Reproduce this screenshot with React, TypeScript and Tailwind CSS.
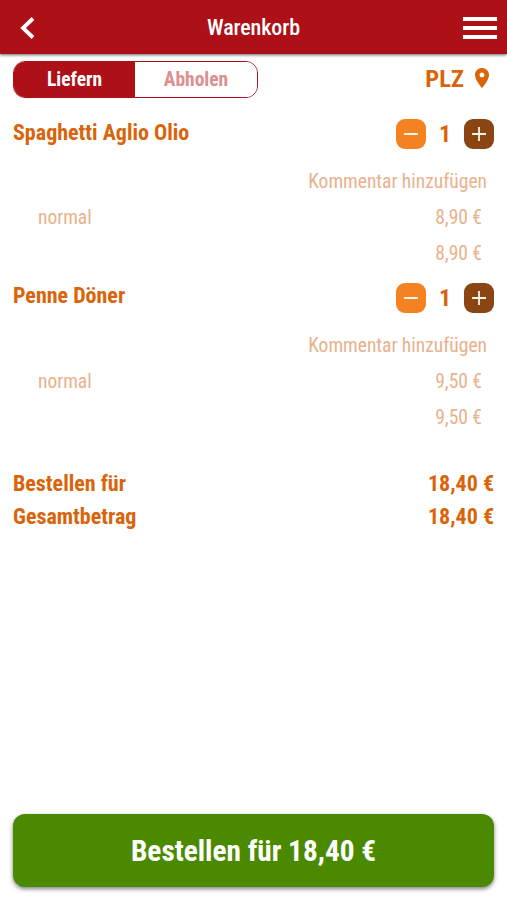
import { useState } from "react";
import { MdLocationOn } from "react-icons/md";

type CartItem = {
  id: number;
  name: string;
  variant: string;
  price: number;
  count: number;
};

const initialItems: CartItem[] = [
  { id: 1, name: "Spaghetti Aglio Olio", variant: "normal", price: 8.9, count: 1 },
  { id: 2, name: "Penne Döner", variant: "normal", price: 9.5, count: 1 },
];

const formatPrice = (value: number) => value.toFixed(2).replace(".", ",") + " €";

const Header = () => {
  return (
    <header className="flex h-[54px] items-center justify-between bg-[#ad1017] pl-5 pr-[10px] text-white shadow-[0_1px_3px_rgba(0,0,0,0.6)]">
      <button className="w-[34px]" aria-label="Zurück">
        <svg width="16" height="22" viewBox="0 0 16 22" fill="none" className="mt-0.5">
          <path d="M13 1.5 3 11l10 9.5" stroke="currentColor" strokeWidth="3.8" />
        </svg>
      </button>
      <h1 className="-ml-[10px] pt-0.5 text-[22px] font-medium tracking-[-0.1px] leading-[52px]">Warenkorb</h1>
      <button className="mt-0.5 flex w-[34px] flex-col gap-[5px]" aria-label="Menü">
        <span className="h-1 bg-white" />
        <span className="h-1 bg-white" />
        <span className="h-1 bg-white" />
      </button>
    </header>
  );
};

const ItemRow = ({
  item,
  onChange,
}: {
  item: CartItem;
  onChange: (id: number, diff: number) => void;
}) => {
  const total = formatPrice(item.price * item.count);

  return (
    <li className="h-[163.6px] text-[19.5px] text-[#eab18c]">
      <div className="flex h-[46px] items-center justify-between text-[22px] font-bold text-[#d9640a]">
        <span className="-mt-1">{item.name}</span>
        <div className="flex items-center">
          <button
            onClick={() => onChange(item.id, -1)}
            className="flex size-[30px] items-center justify-center rounded-[9px] bg-[#f58220] text-white"
            aria-label="Weniger"
          >
            <span className="h-0.5 w-[14px] bg-[#fff3e6]" />
          </button>
          <span className="w-[38px] text-center text-[24px]">{item.count}</span>
          <button
            onClick={() => onChange(item.id, 1)}
            className="flex size-[30px] items-center justify-center rounded-[9px] bg-[#8b4513] text-white"
            aria-label="Mehr"
          >
            <svg width="14" height="14" viewBox="0 0 14 14" stroke="#fff3e6" strokeWidth="1.8">
              <path d="M7 0v14M0 7h14" />
            </svg>
          </button>
        </div>
      </div>
      <p className="mt-[7px] pr-[7px] text-right leading-9">Kommentar hinzufügen</p>
      <div className="flex justify-between pl-[25px] pr-3 leading-9">
        <span>{item.variant}</span>
        <span>{formatPrice(item.price)}</span>
      </div>
      <p className="pr-3 text-right leading-9">{total}</p>
    </li>
  );
};

const App = () => {
  const [items, setItems] = useState(initialItems);
  const [delivery, setDelivery] = useState(true);

  const total = formatPrice(items.reduce((sum, i) => sum + i.price * i.count, 0));

  const handleChange = (id: number, diff: number) => {
    setItems(
      items.map((i) => (i.id === id ? { ...i, count: i.count + diff } : i)).filter((i) => i.count > 0)
    );
  };

  const active = "bg-[#ad1017] text-white";
  const inactive = "bg-white text-[#dc8f91]";

  return (
    <div className="flex h-screen flex-col bg-white font-['Roboto_Condensed','Roboto',sans-serif] [font-stretch:75%]">
      <Header />
      <main className="flex-1 px-[13px] pt-[7px]">
        <div className="flex h-[37px] items-center justify-between">
          <div className="flex h-full w-[245px] overflow-hidden rounded-[12px] border border-[#ad1017] text-[19.5px] font-bold">
            <button onClick={() => setDelivery(true)} className={"w-[121px] " + (delivery ? active : inactive)}>
              Liefern
            </button>
            <button onClick={() => setDelivery(false)} className={"flex-1 " + (delivery ? inactive : active)}>
              Abholen
            </button>
          </div>
          <button className="flex items-center gap-[6px] text-[24.5px] font-bold text-[#d9640a]">
            PLZ
            <MdLocationOn className="-mt-[3px] size-6" />
          </button>
        </div>

        <ul className="mt-[13px]">
          {items.map((item) => (
            <ItemRow key={item.id} item={item} onChange={handleChange} />
          ))}
        </ul>

        <div className="mt-[29px] text-[22px] leading-[33px] font-bold text-[#d9640a]">
          <div className="flex justify-between">
            <span>Bestellen für</span>
            <span>{total}</span>
          </div>
          <div className="flex justify-between">
            <span>Gesamtbetrag</span>
            <span>{total}</span>
          </div>
        </div>
      </main>
      <button className="mx-[13px] mb-[13px] h-[73px] rounded-[12px] bg-[#4b8a00] pt-0.5 text-[29.3px] font-bold text-white shadow-[0_2px_4px_rgba(0,0,0,0.5)]">
        Bestellen für {total}
      </button>
    </div>
  );
};

export default App;
